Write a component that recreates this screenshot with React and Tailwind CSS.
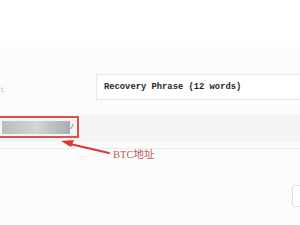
import React from 'react';

function App() {
  return (
    <div className="w-[300px] h-[225px] overflow-hidden bg-[#fcfcfc] relative" style={{ fontFamily: '"Liberation Sans", sans-serif' }}>
      <div className="h-[47px] bg-white" />
      <div className="flex items-start h-[68px] pt-[27px]">
        <div className="w-[96px] shrink-0 pt-[12px] pl-[1px] text-[7px] text-[#b0b0b0] leading-none">t.</div>
        <div className="w-[220px] shrink-0 h-[26px] bg-white border border-[#e8e8e8] flex items-center pl-[7px] pt-[1px]">
          <span className="text-[8.8px] font-bold text-[#1f1f1f]" style={{ fontFamily: '"Liberation Mono", monospace' }}>
            Recovery Phrase (12 words)
          </span>
        </div>
      </div>
      <div className="h-[27px] bg-[#f4f4f4] flex items-start pt-[1px]">
        <div className="w-[81px] shrink-0 h-[22px] -ml-[2px] border-2 border-[#d9534f] flex items-center pl-[2px] pr-[4px]">
          <div className="h-[13px] flex-1 bg-gradient-to-r from-[#b8bcbc] via-[#d4d6d6] to-[#a9adad]" />
          <span className="text-[8px] italic text-[#555] ml-[1px]">/</span>
        </div>
      </div>
      <div className="h-[6px]" />
      <div className="h-px bg-[#ececec]" />
      <div className="flex pl-[113px] -mt-[1px]">
        <span className="text-[10.5px] leading-[14px] text-[#c25a5a]" style={{ fontFamily: '"Liberation Serif", "Noto Sans CJK SC", serif' }}>BTC地址</span>
      </div>
      <div className="flex justify-end mt-[23px]">
        <div className="w-[10px] h-[22px] -mr-[2px] border border-[#e0e0e0] rounded-[3px] bg-white" />
      </div>
      <svg className="absolute left-0 top-0" width="300" height="225" viewBox="0 0 300 225">
        <path d="M109 153 L70 144" stroke="#e0342f" strokeWidth="2" fill="none" strokeLinecap="round" />
        <path d="M61 141 L74 140 L71 147 Z" fill="#e0342f" />
      </svg>
    </div>
  );
}

export default App;
